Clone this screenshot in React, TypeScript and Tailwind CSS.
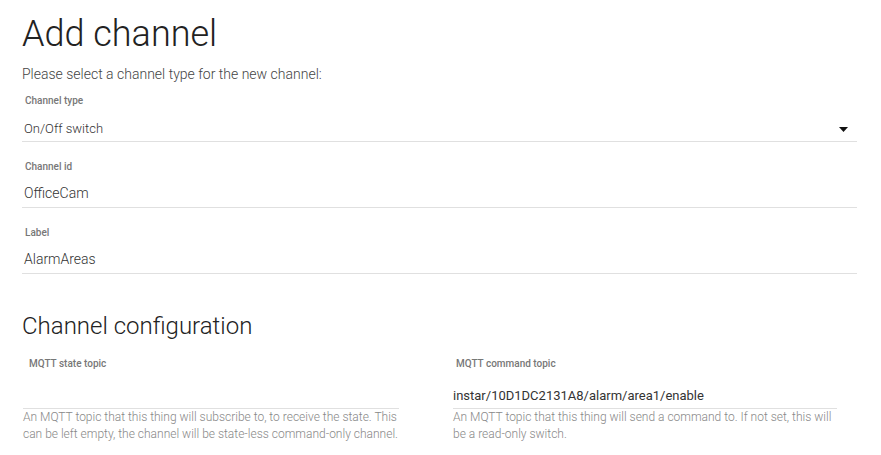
import React from 'react';

interface FieldProps { label: string; value: string; select?: boolean; first?: boolean; }

function Field({ label, value, select, first }: FieldProps) {
  return (
    <div className={first ? 'mt-[10px]' : 'mt-[18px]'}>
      <div className="pl-[3px] text-[10px] leading-[14px] font-medium text-[#777]">{label}</div>
      {select ? (
        <div className="mt-[12px] flex items-center justify-between pb-[3px] pl-[2px] pr-[9px] border-b border-[#e0e0e0]">
          <span className="text-[13px] leading-[18px] font-light text-[#333]">{value}</span>
          <svg width="9" height="5" viewBox="0 0 9 5" className="mt-[1px]">
            <path d="M0 0h9L4.5 5z" fill="#111" />
          </svg>
        </div>
      ) : (
        <div className="mt-[9px] pb-[4px] pl-[2px] border-b border-[#e0e0e0] text-[14px] leading-[20px] font-light text-[#333]">
          {value}
        </div>
      )}
    </div>
  );
}

interface TopicProps { label: string; value: string; help: string; className: string; labelPad: string; }

function Topic({ label, value, help, className, labelPad }: TopicProps) {
  return (
    <div className={className}>
      <div className={`${labelPad} text-[10px] leading-[14px] font-medium text-[#777]`}>{label}</div>
      <div className="mt-[16px] h-[22px] pb-[3px] border-b border-[#e0e0e0] text-[13px] leading-[18px] text-[#333]">
        {value || '\u00a0'}
      </div>
      <p className="text-[12px] leading-[17px] font-light text-[#888]">{help}</p>
    </div>
  );
}

export default function App() {
  return (
    <div className="min-h-[455px] bg-white pl-[22px] font-['Roboto',sans-serif]">
      <div className="w-[835px]">
        <h1 className="pt-[16px] text-[36px] leading-[36px] font-light text-[#222]">Add channel</h1>
        <p className="mt-[12px] text-[14px] leading-[20px] font-light text-[#444]">
          Please select a channel type for the new channel:
        </p>
        <Field first select label="Channel type" value="On/Off switch" />
        <Field label="Channel id" value="OfficeCam" />
        <Field label="Label" value="AlarmAreas" />

        <h2 className="mt-[38px] text-[24px] leading-[28px] font-light text-[#222]">Channel configuration</h2>
        <div className="mt-[17px] flex">
          <Topic
            className="ml-[1px] w-[376px]"
            labelPad="pl-[6px]"
            label="MQTT state topic"
            value=""
            help="An MQTT topic that this thing will subscribe to, to receive the state. This can be left empty, the channel will be state-less command-only channel."
          />
          <Topic
            className="ml-[54px] w-[384px]"
            labelPad="pl-[3px]"
            label="MQTT command topic"
            value="instar/10D1DC2131A8/alarm/area1/enable"
            help="An MQTT topic that this thing will send a command to. If not set, this will be a read-only switch."
          />
        </div>
      </div>
    </div>
  );
}
